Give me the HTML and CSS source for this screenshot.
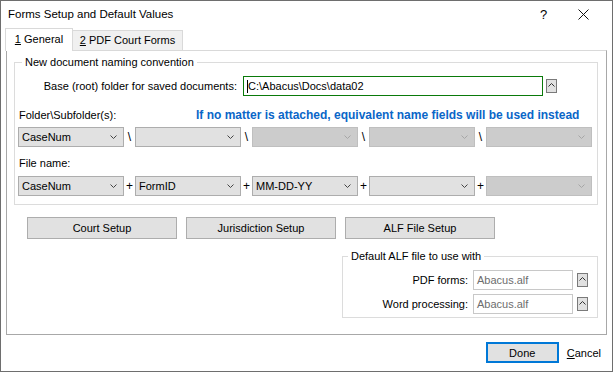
FILE: index.html
```html
<!DOCTYPE html>
<html lang="en">
<head>
    <meta charset="UTF-8">
    <title>Forms Setup and Default Values</title>
    <link rel="stylesheet" href="styles.css">
</head>
<body>

<div class="window">
    <div class="titlebar">
        <span class="title">Forms Setup and Default Values</span>
        <span class="help">?</span>
        <span class="close">
            <svg width="11" height="11" viewBox="0 0 11 11"><path d="M0.5 0.5 L10.5 10.5 M10.5 0.5 L0.5 10.5" stroke="#111" stroke-width="1"/></svg>
        </span>
    </div>

    <div class="tabs">
        <div class="tab tab-active"><u>1</u> General</div>
        <div class="tab tab-pdf"><u>2</u> PDF Court Forms</div>
    </div>

    <div class="panel">
        <fieldset class="group group-naming">
            <legend>New document naming convention</legend>

            <div class="base-row">
                <label class="base-label" for="baseFolder">Base (root) folder for saved documents:</label>
                <div class="text-input focused" id="baseFolder"><span class="caret"></span>C:\Abacus\Docs\data02</div>
                <span class="spin"><svg width="7" height="4" viewBox="0 0 7 4"><polyline points="0.5,3.5 3.5,0.5 6.5,3.5" fill="none" stroke="#333" stroke-width="1"/></svg></span>
            </div>

            <div class="head-row">
                <span class="folder-label">Folder\Subfolder(s):</span>
                <span class="notice">If no matter is attached, equivalent name fields will be used instead</span>
            </div>

            <div class="combo-row">
                <div class="combo">CaseNum<svg class="chev" width="7" height="4" viewBox="0 0 7 4"><polyline points="0.5,0.5 3.5,3.5 6.5,0.5" fill="none" stroke="#444" stroke-width="1"/></svg></div>
                <span class="sep">\</span>
                <div class="combo"><svg class="chev" width="7" height="4" viewBox="0 0 7 4"><polyline points="0.5,0.5 3.5,3.5 6.5,0.5" fill="none" stroke="#444" stroke-width="1"/></svg></div>
                <span class="sep">\</span>
                <div class="combo disabled"><svg class="chev" width="7" height="4" viewBox="0 0 7 4"><polyline points="0.5,0.5 3.5,3.5 6.5,0.5" fill="none" stroke="#a6a6a6" stroke-width="1"/></svg></div>
                <span class="sep">\</span>
                <div class="combo disabled"><svg class="chev" width="7" height="4" viewBox="0 0 7 4"><polyline points="0.5,0.5 3.5,3.5 6.5,0.5" fill="none" stroke="#a6a6a6" stroke-width="1"/></svg></div>
                <span class="sep">\</span>
                <div class="combo disabled"><svg class="chev" width="7" height="4" viewBox="0 0 7 4"><polyline points="0.5,0.5 3.5,3.5 6.5,0.5" fill="none" stroke="#a6a6a6" stroke-width="1"/></svg></div>
            </div>

            <div class="head-row file-head">
                <span class="folder-label">File name:</span>
            </div>

            <div class="combo-row">
                <div class="combo">CaseNum<svg class="chev" width="7" height="4" viewBox="0 0 7 4"><polyline points="0.5,0.5 3.5,3.5 6.5,0.5" fill="none" stroke="#444" stroke-width="1"/></svg></div>
                <span class="sep">+</span>
                <div class="combo">FormID<svg class="chev" width="7" height="4" viewBox="0 0 7 4"><polyline points="0.5,0.5 3.5,3.5 6.5,0.5" fill="none" stroke="#444" stroke-width="1"/></svg></div>
                <span class="sep">+</span>
                <div class="combo">MM-DD-YY<svg class="chev" width="7" height="4" viewBox="0 0 7 4"><polyline points="0.5,0.5 3.5,3.5 6.5,0.5" fill="none" stroke="#444" stroke-width="1"/></svg></div>
                <span class="sep">+</span>
                <div class="combo"><svg class="chev" width="7" height="4" viewBox="0 0 7 4"><polyline points="0.5,0.5 3.5,3.5 6.5,0.5" fill="none" stroke="#444" stroke-width="1"/></svg></div>
                <span class="sep">+</span>
                <div class="combo disabled"><svg class="chev" width="7" height="4" viewBox="0 0 7 4"><polyline points="0.5,0.5 3.5,3.5 6.5,0.5" fill="none" stroke="#a6a6a6" stroke-width="1"/></svg></div>
            </div>
        </fieldset>

        <div class="button-row">
            <button type="button" class="btn">Court Setup</button>
            <button type="button" class="btn">Jurisdiction Setup</button>
            <button type="button" class="btn">ALF File Setup</button>
        </div>

        <fieldset class="group group-alf">
            <legend>Default ALF file to use with</legend>
            <div class="alf-row">
                <span class="alf-label">PDF forms:</span>
                <div class="text-input readonly">Abacus.alf</div>
                <span class="spin"><svg width="7" height="4" viewBox="0 0 7 4"><polyline points="0.5,3.5 3.5,0.5 6.5,3.5" fill="none" stroke="#333" stroke-width="1"/></svg></span>
            </div>
            <div class="alf-row">
                <span class="alf-label">Word processing:</span>
                <div class="text-input readonly">Abacus.alf</div>
                <span class="spin"><svg width="7" height="4" viewBox="0 0 7 4"><polyline points="0.5,3.5 3.5,0.5 6.5,3.5" fill="none" stroke="#333" stroke-width="1"/></svg></span>
            </div>
        </fieldset>
    </div>

    <div class="footer">
        <button type="button" class="btn btn-done">Done</button>
        <span class="cancel"><u>C</u>ancel</span>
    </div>
</div>

</body>
</html>
```

FILE: styles.css
```css
body {
    margin: 0;
    font-family: "Liberation Sans", Arial, sans-serif;
    font-size: 11px;
    color: #000;
    background-color: #fff;
}
.window {
    width: 613px;
    height: 372px;
    box-sizing: border-box;
    border: 1px solid #6e6e6e;
    background-color: #fff;
    display: flex;
    flex-direction: column;
}
.titlebar {
    height: 27px;
    display: flex;
    align-items: center;
    padding-left: 7px;
}
.title {
    flex: 1;
    font-size: 11.5px;
    margin-top: -1px;
}
.help {
    width: 12px;
    font-size: 13px;
    margin-right: 26px;
}
.close {
    display: flex;
    margin-right: 23px;
}
.tabs {
    display: flex;
    align-items: flex-end;
    height: 22px;
    margin-left: 4px;
}
.tab {
    box-sizing: border-box;
    height: 20px;
    line-height: 19px;
    text-align: center;
    border: 1px solid #d9d9d9;
    border-bottom: none;
    border-left: none;
    background-color: #f0f0f0;
}
.tab-active {
    position: relative;
    z-index: 1;
    width: 68px;
    height: 23px;
    margin-bottom: -1px;
    line-height: 20px;
    background-color: #fff;
    border-left: 1px solid #d9d9d9;
}
.tab-pdf {
    width: 110px;
}
.panel {
    box-sizing: border-box;
    width: 601px;
    height: 285px;
    margin-left: 5px;
    border: 1px solid #a8a8a8;
    border-top-color: #d9d9d9;
}
.group {
    box-sizing: border-box;
    margin: 4px 0 0 7px;
    border: 1px solid #dcdcdc;
    padding: 0 0 8px 3px;
    min-width: 0;
}
.group legend {
    line-height: 14px;
    padding: 0 3px;
    margin-left: 4px;
}
.group-naming {
    width: 584px;
}
.base-row {
    display: flex;
    align-items: center;
    height: 20px;
    margin-top: 7px;
}
.base-label {
    width: 219px;
    text-align: right;
    margin-right: 6px;
}
.text-input {
    box-sizing: border-box;
    height: 20px;
    line-height: 18px;
    padding-left: 3px;
    border: 1px solid #c8c8c8;
    background-color: #fff;
    white-space: nowrap;
}
.focused {
    width: 300px;
    border-color: #0a7a0a;
    display: flex;
    align-items: center;
}
.caret {
    width: 1px;
    height: 13px;
    background-color: #000;
}
.spin {
    box-sizing: border-box;
    width: 11px;
    height: 14px;
    margin-left: 3px;
    border: 1px solid #7a7a7a;
    background-color: #e1e1e1;
    display: flex;
    justify-content: center;
    padding-top: 3px;
}
.head-row {
    height: 15px;
    line-height: 15px;
    margin-top: 12px;
    display: flex;
}
.file-head {
    margin-top: 9px;
}
.folder-label {
    width: 177px;
    padding-left: 1px;
}
.notice {
    color: #0a66c8;
    font-weight: bold;
    font-size: 12px;
    white-space: nowrap;
}
.combo-row {
    display: flex;
    align-items: center;
    margin-top: 4px;
}
.combo-row + .head-row + .combo-row {
    margin-top: 5px;
}
.combo {
    box-sizing: border-box;
    width: 106px;
    height: 20px;
    line-height: 18px;
    padding-left: 3px;
    border: 1px solid #adadad;
    background-color: #e1e1e1;
    display: flex;
    align-items: center;
}
.combo .chev {
    margin-left: auto;
    margin-right: 6px;
}
.combo.disabled {
    background-color: #cccccc;
    border-color: #bfbfbf;
}
.sep {
    width: 11px;
    text-align: center;
    font-size: 12px;
}
.button-row {
    display: flex;
    gap: 9px;
    margin: 12px 0 0 20px;
}
.btn {
    box-sizing: border-box;
    width: 150px;
    height: 22px;
    padding: 0;
    font-family: "Liberation Sans", Arial, sans-serif;
    font-size: 11px;
    color: #000;
    background-color: #e1e1e1;
    border: 1px solid #adadad;
}
.group-alf {
    width: 256px;
    margin: 10px 0 0 335px;
    padding: 0 0 3px 1px;
}
.alf-row {
    display: flex;
    align-items: center;
    height: 20px;
    margin-top: 4px;
}
.group-alf legend + .alf-row {
    margin-top: 7px;
}
.alf-label {
    width: 124px;
    text-align: right;
    margin-right: 5px;
}
.readonly {
    width: 100px;
    color: #6d6d6d;
}
.alf-row .spin {
    margin-left: 4px;
}
.footer {
    display: flex;
    align-items: center;
    justify-content: flex-end;
    margin-top: 7px;
    padding-right: 11px;
}
.btn-done {
    width: 73px;
    height: 21px;
    border: 2px solid #0078d7;
}
.cancel {
    margin-left: 8px;
}
```
